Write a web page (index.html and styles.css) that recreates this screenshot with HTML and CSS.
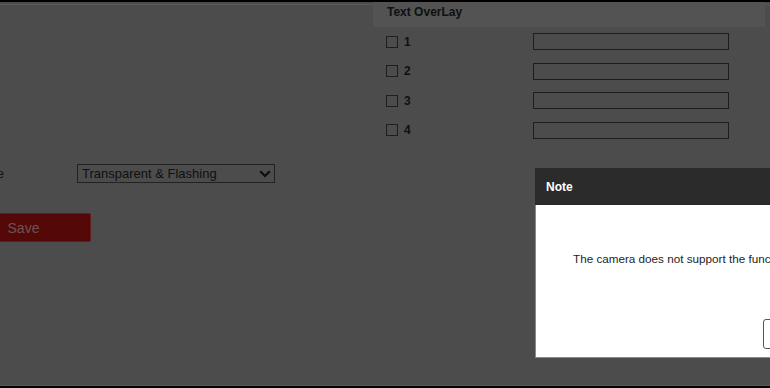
FILE: index.html
```html
<!DOCTYPE html>
<html>
<head>
<meta charset="utf-8">
<link rel="stylesheet" href="styles.css">
</head>
<body>
<div class="frame">
  <div class="page">
    <div class="left">
      <div class="field-row">
        <span class="field-label">Mode</span>
        <div class="select">
          <span class="select-text">Transparent &amp; Flashing</span>
          <svg class="chev" width="12" height="8" viewBox="0 0 12 8"><path d="M1.2 1.2 L6 6 L10.8 1.2" fill="none" stroke="#1c1c1c" stroke-width="2.2"/></svg>
        </div>
      </div>
      <button class="save">Save</button>
    </div>
    <div class="right">
      <div class="band">Text OverLay</div>
      <div class="rows">
        <div class="row"><span class="cb"></span><span class="num">1</span><span class="input"></span></div>
        <div class="row"><span class="cb"></span><span class="num">2</span><span class="input"></span></div>
        <div class="row"><span class="cb"></span><span class="num">3</span><span class="input"></span></div>
        <div class="row"><span class="cb"></span><span class="num">4</span><span class="input"></span></div>
      </div>
    </div>
  </div>
  <div class="overlay"></div>
  <div class="modal">
    <div class="modal-head">Note</div>
    <div class="modal-body">
      <p class="msg">The camera does not support the function.</p>
      <button class="ok">OK</button>
    </div>
  </div>
</div>
</body>
</html>
```
FILE: styles.css
```css
html, body {
  margin: 0;
  padding: 0;
  overflow: hidden;
}
body {
  width: 770px;
  height: 388px;
  font-family: "Liberation Sans", Arial, sans-serif;
}
.frame {
  position: relative;
  box-sizing: border-box;
  width: 770px;
  height: 388px;
  overflow: hidden;
  border-top: 2px solid #000;
  border-bottom: 2px solid #000;
  background:
    linear-gradient(#b4b4b4, #b4b4b4) 0 2px / 100% 1px no-repeat,
    linear-gradient(#b4b4b4, #b4b4b4) 0 100% / 100% 1px no-repeat,
    #989898;
}
.page {
  display: flex;
  align-items: flex-start;
}
.left {
  flex: none;
  width: 453px;
  margin-left: -80px;
  padding-top: 162px;
}
.field-row {
  display: flex;
  align-items: center;
}
.field-label {
  width: 84px;
  text-align: right;
  font-size: 13px;
  color: #282828;
}
.select {
  box-sizing: border-box;
  margin-left: 73px;
  width: 198px;
  height: 19px;
  border: 1px solid #444;
  display: flex;
  align-items: center;
  justify-content: space-between;
  padding: 0 2px 0 4px;
}
.select-text {
  font-size: 13px;
  color: #222;
}
.chev {
  margin-right: 1px;
}
.save {
  display: block;
  box-sizing: border-box;
  margin: 30px 0 0 36px;
  width: 135px;
  height: 29px;
  border: 1px solid #c43a3a;
  border-radius: 2px;
  background: #a81010;
  color: #dca4a4;
  font-family: "Liberation Sans", Arial, sans-serif;
  font-size: 14px;
  padding: 0;
}
.right {
  flex: none;
  width: 392px;
}
.band {
  box-sizing: border-box;
  height: 25px;
  line-height: 20px;
  padding-left: 14px;
  background: #a6a6a6;
  font-size: 12px;
  font-weight: bold;
  color: #222;
}
.rows {
  display: flex;
  flex-direction: column;
}
.row {
  height: 29.5px;
  display: flex;
  align-items: center;
}
.cb {
  box-sizing: border-box;
  width: 12px;
  height: 12px;
  margin-left: 13px;
  border: 1px solid #3c3c3c;
}
.num {
  margin-left: 6px;
  font-size: 12px;
  font-weight: bold;
  color: #222;
}
.input {
  box-sizing: border-box;
  margin-left: auto;
  margin-right: 36px;
  width: 196px;
  height: 17px;
  border: 1px solid #3a3a3a;
}
.overlay {
  position: absolute;
  inset: 0;
  background: rgba(0, 0, 0, 0.5);
}
.modal {
  position: absolute;
  left: 535px;
  top: 166px;
  width: 420px;
}
.modal-head {
  box-sizing: border-box;
  height: 37px;
  line-height: 37px;
  padding: 1px 0 0 11px;
  background: #2b2b2b;
  color: #fff;
  font-size: 12px;
  font-weight: bold;
}
.modal-body {
  box-sizing: border-box;
  height: 153px;
  background: #fff;
  border-left: 1px solid #8a8a8a;
  border-bottom: 1px solid #8a8a8a;
  padding-top: 47px;
  display: flex;
  flex-direction: column;
  align-items: flex-start;
}
.msg {
  margin: 0 0 0 37px;
  font-size: 11.7px;
  line-height: 14px;
  color: #1e1e1e;
  white-space: nowrap;
}
.ok {
  margin: 53px 0 0 227px;
  box-sizing: border-box;
  width: 70px;
  height: 30px;
  background: #fff;
  border: 1px solid #555;
  border-radius: 3px;
  font-family: "Liberation Sans", Arial, sans-serif;
  font-size: 12px;
  color: #222;
}
```
